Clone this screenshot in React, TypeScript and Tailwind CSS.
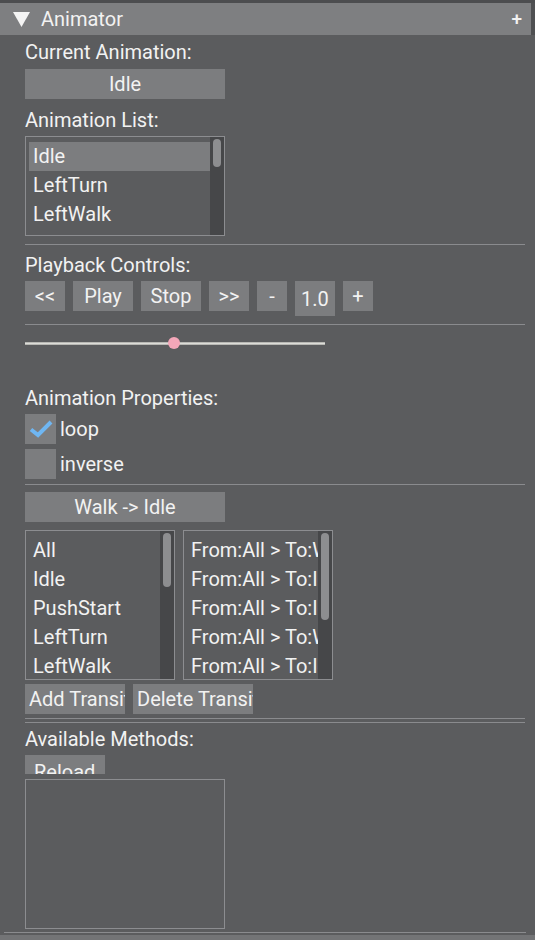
import React from "react";

const font = { fontFamily: "Roboto, 'Noto Sans', sans-serif" };

function Btn({ children, w, h = 30, center = true, className = "" }: { children: React.ReactNode; w: number; h?: number; center?: boolean; className?: string }) {
  return (
    <div
      className={`bg-[#7c7d7f] text-[#f2f2f2] overflow-hidden whitespace-nowrap flex items-center ${center ? "justify-center" : "justify-start pl-[4px]"} ${className}`}
      style={{ width: w, height: h }}
    >
      {children}
    </div>
  );
}

function ListBox({ items, w, h, selected, thumbH }: { items: string[]; w: number; h: number; selected?: number; thumbH: number }) {
  return (
    <div className="border border-[#8c8d90] flex overflow-hidden" style={{ width: w, height: h }}>
      <div className="flex-1 pl-[3px] pt-[5px] overflow-hidden">
        {items.map((it, i) => (
          <div
            key={i}
            className={`h-[29px] leading-[29px] pl-[4px] whitespace-nowrap overflow-hidden ${i === selected ? "bg-[#7c7d7f]" : ""}`}
          >
            {it}
          </div>
        ))}
      </div>
      <div className="w-[14px] bg-[#464749] pt-[2px] flex justify-center shrink-0">
        <div className="w-[8px] rounded-[4px] bg-[#8d8e90]" style={{ height: thumbH }} />
      </div>
    </div>
  );
}

export default function App() {
  return (
    <div className="w-[535px] h-[940px] bg-[#5b5c5e] text-[#f2f2f2] text-[20px] overflow-hidden relative" style={font}>
      <div className="h-[3px] bg-[#4c4d4f]" />
      <div className="flex">
        <div className="w-[531px] h-[32px] bg-[#7e7f81] flex items-center pl-[13px] pr-[9px]">
          <svg width="17" height="15" viewBox="0 0 17 15" className="mr-[11px]">
            <polygon points="0,0 17,0 8.5,15" fill="#f4f4f4" />
          </svg>
          <span className="text-[20px]">Animator</span>
          <span className="ml-auto text-[19px] font-medium">+</span>
        </div>
        <div className="flex-1 bg-[#4f5052]" />
      </div>
      <div className="pl-[25px]">
        <div className="h-[30px] leading-[30px] mt-[2px]">Current Animation:</div>
        <Btn w={200} className="mt-[2px]">Idle</Btn>
        <div className="h-[30px] leading-[30px] mt-[6px]">Animation List:</div>
        <div className="mt-[1px]">
          <ListBox items={["Idle", "LeftTurn", "LeftWalk"]} w={200} h={100} selected={0} thumbH={28} />
        </div>
        <div className="mt-[8px] h-[1px] w-[500px] bg-[#8a8b8e]" />
        <div className="h-[30px] leading-[30px] mt-[5px]">Playback Controls:</div>
        <div className="flex items-start gap-[8px] mt-[1px]">
          <Btn w={40}>&lt;&lt;</Btn>
          <Btn w={60}>Play</Btn>
          <Btn w={60}>Stop</Btn>
          <Btn w={40}>&gt;&gt;</Btn>
          <Btn w={30}>-</Btn>
          <Btn w={40} h={35}>1.0</Btn>
          <Btn w={30}>+</Btn>
        </div>
        <div className="mt-[8px] h-[1px] w-[500px] bg-[#8a8b8e]" />
        <div className="relative h-[12px] w-[300px] mt-[12px]">
          <div className="absolute left-0 right-0 top-[5px] h-[3px] bg-[#dcdcd8] border-y border-[#b8b8b4]" />
          <div className="absolute left-[143px] top-0 w-[12px] h-[12px] rounded-full bg-[#f4a7b9]" />
        </div>
        <div className="h-[30px] leading-[30px] mt-[34px]">Animation Properties:</div>
        <div className="flex items-center mt-[1px] h-[30px]">
          <div className="w-[31px] h-[30px] bg-[#7c7d7f] flex items-center justify-center">
            <svg width="24" height="18" viewBox="0 0 24 18">
              <polyline points="2,9.5 9,15 22,2" fill="none" stroke="#6fb6f2" strokeWidth="4" strokeLinejoin="miter" />
            </svg>
          </div>
          <span className="ml-[4px]">loop</span>
        </div>
        <div className="flex items-center mt-[5px] h-[30px]">
          <div className="w-[31px] h-[30px] bg-[#7c7d7f]" />
          <span className="ml-[4px]">inverse</span>
        </div>
        <div className="mt-[5px] h-[1px] w-[500px] bg-[#8a8b8e]" />
        <Btn w={200} className="mt-[7px]">Walk -&gt; Idle</Btn>
        <div className="flex gap-[8px] mt-[8px]">
          <ListBox items={["All", "Idle", "PushStart", "LeftTurn", "LeftWalk"]} w={150} h={150} thumbH={54} />
          <ListBox items={["From:All > To:Walk", "From:All > To:Idle", "From:All > To:Idle", "From:All > To:Walk", "From:All > To:Idle"]} w={150} h={150} thumbH={87} />
        </div>
        <div className="flex gap-[8px] mt-[4px]">
          <Btn w={100} center={false}>Add Transition</Btn>
          <Btn w={120} center={false}>Delete Transition</Btn>
        </div>
        <div className="mt-[4px] h-[1px] w-[500px] bg-[#8a8b8e]" />
        <div className="mt-[3px] h-[1px] w-[500px] bg-[#8a8b8e]" />
        <div className="h-[30px] leading-[30px] mt-[1px]">Available Methods:</div>
        <div className="mt-[1px] w-[80px] h-[19px] bg-[#7c7d7f] overflow-hidden">
          <div className="h-[30px] leading-[30px] pl-[9px] mt-[2px]">Reload</div>
        </div>
        <div className="mt-[5px] w-[200px] h-[150px] border border-[#8c8d90]" />
      </div>
      <div className="absolute left-[4px] top-[932px] w-[522px] h-[1px] bg-[#8a8b8e]" />
      <div className="absolute left-0 top-[935px] w-full h-[5px] bg-[#737476]" />
    </div>
  );
}
